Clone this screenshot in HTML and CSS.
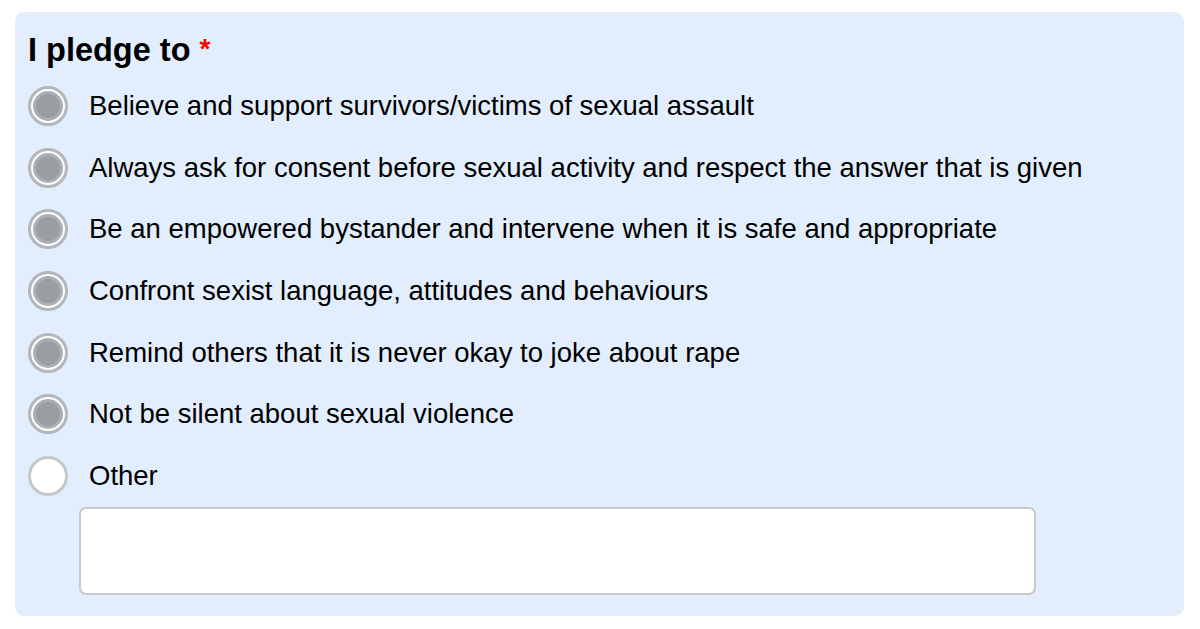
FILE: index.html
```html
<!DOCTYPE html>
<html>
<head>
<meta charset="utf-8">
<link rel="stylesheet" href="styles.css">
</head>
<body>
<div class="panel">
  <div class="title">I pledge to <span class="req">*</span></div>
  <div class="options">
    <label class="opt"><span class="radio checked"></span><span class="txt">Believe and support survivors/victims of sexual assault</span></label>
    <label class="opt"><span class="radio checked"></span><span class="txt">Always ask for consent before sexual activity and respect the answer that is given</span></label>
    <label class="opt"><span class="radio checked"></span><span class="txt">Be an empowered bystander and intervene when it is safe and appropriate</span></label>
    <label class="opt"><span class="radio checked"></span><span class="txt">Confront sexist language, attitudes and behaviours</span></label>
    <label class="opt"><span class="radio checked"></span><span class="txt">Remind others that it is never okay to joke about rape</span></label>
    <label class="opt"><span class="radio checked"></span><span class="txt">Not be silent about sexual violence</span></label>
    <label class="opt"><span class="radio"></span><span class="txt">Other</span></label>
  </div>
  <div class="other-box"></div>
</div>
</body>
</html>
```
FILE: styles.css
```css
html, body {
  margin: 0;
  padding: 0;
  background: #ffffff;
}
body {
  font-family: "Liberation Sans", Arial, sans-serif;
  color: #000;
}
.panel {
  margin: 12px 16px 0 15px;
  height: 604px;
  box-sizing: border-box;
  background: #e2eefd;
  border-radius: 9px;
  padding: 17px 0 0 13px;
}
.title {
  font-size: 32.5px;
  font-weight: bold;
  line-height: 40px;
  height: 40px;
}
.req {
  color: #ff0000;
  font-size: 28px;
  vertical-align: 3px;
}
.options {
  display: flex;
  flex-direction: column;
  gap: 21.7px;
  margin-top: 17px;
}
.opt {
  display: flex;
  align-items: center;
  height: 40px;
  gap: 21px;
}
.radio {
  width: 40px;
  height: 40px;
  box-sizing: border-box;
  border-radius: 50%;
  border: 3px solid #c5c8cb;
  background: #ffffff;
  flex: none;
  display: flex;
  align-items: center;
  justify-content: center;
}
.radio.checked {
  border-color: #b3b7bb;
}
.radio.checked::after {
  content: "";
  width: 30px;
  height: 30px;
  box-sizing: border-box;
  border-radius: 50%;
  background: #999ea4;
  border: 3px solid #acb0b5;
}
.txt {
  font-size: 27.5px;
}
.other-box {
  margin: 11px 0 0 51px;
  width: 957px;
  height: 88px;
  box-sizing: border-box;
  background: #fff;
  border: 2px solid #c9c9c9;
  border-radius: 7px;
}
```
